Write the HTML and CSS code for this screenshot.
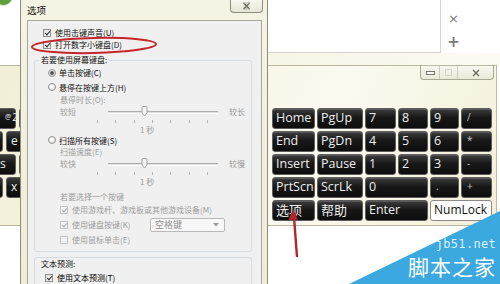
FILE: index.html
```html
<!DOCTYPE html>
<html>
<head>
<meta charset="utf-8">
<link rel="stylesheet" href="styles.css">
</head>
<body>
<div class="dot"></div>
<div class="doc"></div>
<div class="band"></div>
<div class="tools"><span class="tool">×</span><span class="tool plus">+</span></div>

<div class="osk">
  <div class="osk-bar">
    <div class="wbtns">
      <span class="wbtn"><i class="min"></i></span>
      <span class="wbtn"><i class="max"></i></span>
      <span class="wbtn close"><svg width="8" height="8" viewBox="0 0 8 8"><path d="M1 1L7 7M7 1L1 7" stroke="#6b6b60" stroke-width="1.4"/></svg></span>
    </div>
  </div>
  <div class="osk-body">
    <div class="left-keys">
      <div class="lrow a"><span class="lkey two"><sup>@</sup>2</span><span class="lkey"></span></div>
      <div class="lrow b"><span class="lkey"></span><span class="lkey">e</span></div>
      <div class="lrow a"><span class="lkey s">s</span><span class="lkey"></span></div>
      <div class="lrow b"><span class="lkey"></span><span class="lkey">x</span></div>
    </div>
    <div class="pad">
      <div class="key">Home</div><div class="key">PgUp</div><div class="key">7</div><div class="key">8</div><div class="key">9</div><div class="key sym">/</div>
      <div class="key">End</div><div class="key">PgDn</div><div class="key">4</div><div class="key">5</div><div class="key">6</div><div class="key sym">*</div>
      <div class="key">Insert</div><div class="key">Pause</div><div class="key">1</div><div class="key">2</div><div class="key">3</div><div class="key sym">-</div>
      <div class="key">PrtScn</div><div class="key">ScrLk</div><div class="key span2">0</div><div class="key sym">.</div><div class="key sym">+</div>
      <div class="key cn">选项</div><div class="key cn">帮助</div><div class="key span2">Enter</div><div class="key lock span2">NumLock</div>
    </div>
  </div>
</div>

<div class="dlg">
  <div class="dlg-bar">
    <span class="dlg-title">选项</span>
    <span class="dlg-close"><svg width="9" height="8" viewBox="0 0 9 8"><path d="M1.5 1L7.5 7M7.5 1L1.5 7" stroke="#6e6e66" stroke-width="1.6"/><path d="M1 1L8 1M1 7L8 7" stroke="#a9a89c" stroke-width="0.8"/></svg></span>
  </div>
  <div class="client">
    <div class="cb top on"><span class="box"></span>使用击键声音(U)</div>
    <div class="cb top on"><span class="box"></span>打开数字小键盘(D)</div>

    <fieldset class="grp">
      <legend>若要使用屏幕键盘:</legend>
      <div class="radio r1 sel"><span class="rb"></span>单击按键(C)</div>
      <div class="radio r2"><span class="rb"></span>悬停在按键上方(H)</div>
      <div class="sub dis">悬停时长(O):</div>
      <div class="slider dis">
        <div class="srow"><span>较短</span><span class="track"><svg class="thumb" width="7" height="11" viewBox="0 0 7 11"><path d="M1 1.5Q1 .5 2 .5H5Q6 .5 6 1.5V7L3.5 10L1 7Z" fill="#f4f4f4" stroke="#a2a2a2"/></svg></span><span>较长</span></div>
        <div class="ticks"><i></i><i></i><i></i><i></i><i></i><i></i><i></i></div>
        <div class="val">1 秒</div>
      </div>
      <div class="radio r3"><span class="rb"></span>扫描所有按键(S)</div>
      <div class="sub dis">扫描速度(E)</div>
      <div class="slider dis">
        <div class="srow"><span>较快</span><span class="track"><svg class="thumb" width="7" height="11" viewBox="0 0 7 11"><path d="M1 1.5Q1 .5 2 .5H5Q6 .5 6 1.5V7L3.5 10L1 7Z" fill="#f4f4f4" stroke="#a2a2a2"/></svg></span><span>较慢</span></div>
        <div class="ticks"><i></i><i></i><i></i><i></i><i></i><i></i><i></i></div>
        <div class="val">1 秒</div>
      </div>
      <div class="sub dis pick">若要选择一个按键</div>
      <div class="cb in dis on c1"><span class="box"></span>使用游戏杆、游戏板或其他游戏设备(M)</div>
      <div class="cb in dis on c2"><span class="box"></span><span class="cbl">使用键盘按键(K)</span><span class="combo">空格键<svg width="6" height="4" viewBox="0 0 6 4"><path d="M0 0H6L3 3.5Z" fill="#9a9a9a"/></svg></span></div>
      <div class="cb in dis c3"><span class="box"></span>使用鼠标单击(E)</div>
    </fieldset>

    <div class="grp2">
      <div class="cap">文本预测:</div>
      <div class="cb pred on"><span class="box"></span>使用文本预测(T)</div>
    </div>
  </div>
</div>

<svg class="ring" width="200" height="70" viewBox="0 0 200 70"><ellipse cx="94" cy="45.5" rx="62" ry="7.5" transform="rotate(-1.3 94 45.5)" fill="none" stroke="#c4262c" stroke-width="2"/></svg>
<svg class="arrow" width="20" height="60" viewBox="0 0 20 60"><path d="M9 8L12 48" stroke="#b3262b" stroke-width="2.4"/><path d="M8 0L3.5 11L13 10.5Z" fill="#b3262b"/></svg>

<div class="wm"></div>
<div class="wm-text"><span class="wm-url">jb51.net</span><span class="wm-name">脚本之家</span></div>
</body>
</html>
```
FILE: styles.css
```css
* { box-sizing: border-box; }
html, body { margin: 0; padding: 0; }
body {
  width: 500px; height: 284px; overflow: hidden; position: relative;
  background: #fff;
  font-family: "Noto Sans CJK SC", "Noto Sans", sans-serif;
}

/* desktop bits */
.dot { position: absolute; left: -6px; top: -13px; width: 19px; height: 19px; border-radius: 50%; background: #5f9f3f; border: 1px solid #d9e8cf; }
.doc { position: absolute; left: 268px; top: 0; width: 173px; height: 53px; background: #fff; border-right: 1px solid #d6d6d0; border-bottom: 1px solid #d6d6d0; }
.band { position: absolute; left: 268px; top: 53px; width: 232px; height: 12px; background: linear-gradient(90deg, #f6f5e6, #fbfbf4); }
.tools { position: absolute; left: 447px; top: 10px; width: 13px; display: flex; flex-direction: column; align-items: center; gap: 5px; color: #7a7a7a; font: 13px/18px "DejaVu Sans", sans-serif; }
.tool.plus { font-size: 15px; font-weight: bold; }

/* on-screen keyboard window */
.osk {
  position: absolute; left: 0; top: 65px; width: 497px; height: 161px;
  border: 1px solid #bcb8a0; border-left: none;
  background: linear-gradient(115deg, #f1efd6 0%, #f7f6e6 40%, #fbfaf0 62%, #f2f0d8 100%);
}
.osk-bar { height: 14px; display: flex; justify-content: flex-end; padding-right: 2px; }
.wbtns { display: flex; border: 1px solid #a9a796; border-top: none; border-radius: 0 0 4px 4px; overflow: hidden; background: linear-gradient(#f8f7ee, #ebe9d9); }
.wbtn { width: 18px; height: 13px; display: flex; align-items: center; justify-content: center; border-left: 1px solid #cfcdbd; }
.wbtn:first-child { border-left: none; }
.wbtn.close { width: 36px; }
.min { display: block; width: 9px; height: 4px; border: 1px solid #77776c; background: #fff; }
.max { display: block; width: 7px; height: 7px; border: 1px solid #d6d4c6; }
.osk-body { display: flex; margin-top: 28px; }

.left-keys { width: 40px; flex: none; overflow: hidden; display: grid; grid-auto-rows: 21px; row-gap: 2px; }
.lrow { display: flex; gap: 3px; }
.lrow.a { margin-left: -13px; }
.lrow.b { margin-left: -26px; }
.lkey {
  flex: none; width: 29px; height: 21px; border: 1px solid #5d5d5d; border-radius: 3px;
  background: linear-gradient(#3b3b3b, #171717 45%, #0d0d0d);
  color: #eee; font: 12px/17px "Open Sans", sans-serif; padding-left: 4px;
}
.lrow.a .lkey:first-child { padding-left: 17px; }
.lkey.two { font-size: 10px; line-height: 10px; padding-top: 3px; }
.lkey.two sup { font-size: 7px; vertical-align: top; margin-right: 1px; }
.lkey.s { padding-left: 12px !important; }

.pad {
  margin-left: auto; margin-right: 4px;
  display: grid; grid-template-columns: 43px 46px 31px 30px 29px 31px; grid-auto-rows: 21px; gap: 2px;
}
.key {
  border: 1px solid #5d5d5d; border-radius: 3px;
  background: linear-gradient(#3d3d3d, #181818 45%, #0d0d0d);
  box-shadow: inset 0 1px 0 rgba(255, 255, 255, .15);
  color: #ededed; font: 12.5px/17px "Open Sans", sans-serif; padding: 0 2px 0 3px;
  white-space: nowrap; overflow: hidden;
}
.key.span2 { grid-column: span 2; }
.key.sym { font-size: 10px; color: #c8c8c8; padding-left: 5px; }
.key.cn { font: 13px/17px "Noto Sans CJK SC", sans-serif; }
.key.lock { background: #fff; border-color: #8a8a8a; color: #111; box-shadow: none; font-size: 12px; }

/* options dialog */
.dlg {
  position: absolute; left: 20px; top: 0; width: 248px; height: 284px; overflow: hidden;
  background: linear-gradient(180deg, #f5f3e3, #efedd8);
  border: 1px solid #8c8b7e; border-top: none; border-bottom: none;
  padding: 0 5px 0 6px;
}
.dlg-bar { height: 20px; display: flex; justify-content: space-between; align-items: flex-start; }
.dlg-title { margin-top: 5px; font-size: 9.5px; line-height: 11px; color: #111; }
.dlg-close {
  width: 33px; height: 13px; margin-right: -1px; display: flex; align-items: center; justify-content: center;
  border: 1px solid #8d8c80; border-top: none; border-radius: 0 0 4px 4px;
  background: linear-gradient(#f8f7ef, #e7e5d5);
}
.client {
  height: 264px; overflow: hidden; background: #f0f0f0; border: 1px solid #a9a79d; border-bottom: none;
  font-size: 8px; color: #111; padding-top: 6px;
}
.cb { display: flex; align-items: center; height: 12px; line-height: 12px; white-space: nowrap; }
.cb .box {
  flex: none; width: 8px; height: 8px; margin-right: 4px; position: relative;
  border: 1px solid #8e8f8f; background: linear-gradient(135deg, #dedede, #fbfbfb);
}
.cb.on .box::after {
  content: ""; position: absolute; left: 2px; top: 0; width: 2px; height: 4px;
  border: solid #2b2b2b; border-width: 0 1.4px 1.4px 0; transform: rotate(40deg);
}
.cb.top { padding-left: 15px; }
.dis { color: #9d9d9d; }
.cb.dis .box { border-color: #c2c2c2; background: #f4f4f4; }
.cb.dis.on .box::after { border-color: #a8a8a8; }

.grp {
  margin: 4px 9px 0 6px; padding: 0 0 5px 0; min-width: 0;
  border: 1px solid #d5dde2; border-radius: 3px;
}
.grp legend { padding: 0 2px; margin-left: 4px; line-height: 10px; font-size: 8px; }
.radio { display: flex; align-items: center; padding-left: 13px; white-space: nowrap; }
.radio.r1 { height: 15px; }
.radio.r2 { height: 14px; }
.radio.r3 { height: 12px; }
.rb {
  flex: none; width: 8px; height: 8px; border-radius: 50%; margin-right: 3px;
  border: 1px solid #8e8f8f; background: radial-gradient(circle at 40% 35%, #fff, #dcdcdc);
  display: flex; align-items: center; justify-content: center;
}
.radio.sel .rb::after { content: ""; width: 4px; height: 4px; border-radius: 50%; background: #555; }
.sub { height: 12px; line-height: 12px; padding-left: 25px; }
.sub.pick { margin-top: 5px; }
.slider { height: 28px; }
.srow { display: grid; grid-template-columns: 37px 110px auto; column-gap: 11px; padding-left: 25px; height: 12px; align-items: center; line-height: 12px; }
.track { position: relative; height: 3px; border-top: 1px solid #acacac; border-bottom: 1px solid #fff; background: #e2e2e2; }
.thumb { position: absolute; left: 33px; top: -6px; }
.ticks { margin-left: 62px; width: 111px; height: 7px; display: flex; justify-content: space-between; }
.ticks i { width: 1px; height: 3px; margin-top: 2px; background: #b4b4b4; }
.val { height: 9px; line-height: 9px; padding-left: 105px; }
.cb.in { padding-left: 25px; }
.cb.c1 { margin-top: 1px; }
.cb.c2 { margin-top: 2px; height: 14px; }
.cb.c3 { margin-top: 2px; }
.cbl { width: 78px; flex: none; }
.combo {
  width: 75px; height: 14px; border: 1px solid #b9b9b9; border-radius: 2px; background: #f7f7f7;
  display: flex; align-items: center; justify-content: space-between; padding: 0 5px 0 4px; color: #8f8f8f; font-size: 9px;
}

.grp2 { margin: 5px 9px 0 6px; border: 1px solid #d5dde2; border-bottom: none; border-radius: 3px 3px 0 0; padding: 1px 0 0 6px; height: 27px; overflow: hidden; }
.cap { height: 10px; line-height: 10px; color: #111; }
.cb.pred { margin-top: 3px; padding-left: 4px; color: #000; height: 11px; }

/* annotations */
.ring { position: absolute; left: 0; top: 0; }
.arrow { position: absolute; left: 285px; top: 209px; }

/* watermark */
.wm { position: absolute; left: 349px; top: 211px; width: 151px; height: 73px; background: #3ca8e0; clip-path: polygon(0 100%, 100% 0, 100% 100%); }
.wm-text { position: absolute; right: 4px; top: 237px; display: flex; flex-direction: column; align-items: flex-end; }
.wm-url { font: 12px "DejaVu Sans Mono", monospace; line-height: normal; color: #dbf1fb; letter-spacing: 0.3px; }
.wm-name { font: 21px "Noto Sans CJK SC", sans-serif; line-height: normal; color: #fff; letter-spacing: 1px; }
```
